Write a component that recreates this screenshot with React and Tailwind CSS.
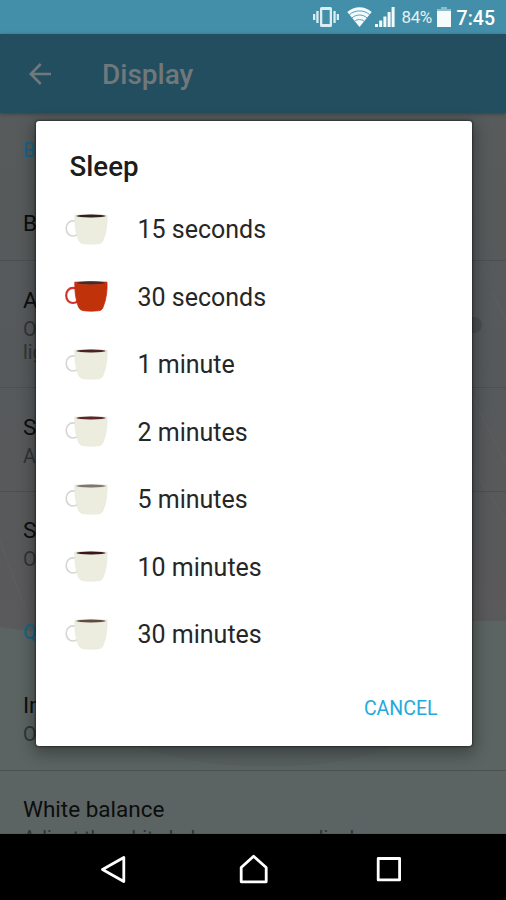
import React from "react";

const options = [
    { label: "15 seconds", coffee: "#30211d" },
    { label: "30 seconds", coffee: "#4a2a20", selected: true },
    { label: "1 minute", coffee: "#4b2220" },
    { label: "2 minutes", coffee: "#5a2428" },
    { label: "5 minutes", coffee: "#81766f" },
    { label: "10 minutes", coffee: "#3b1517" },
    { label: "30 minutes", coffee: "#624c3d" },
];

function Cup({ coffee, selected }) {
    const body = selected ? "#c0330a" : "#ecedde";
    const edge = selected ? "#cf2310" : "#e9eadc";
    const handle = selected ? "#d3332a" : "#d6d6d2";
    return (
        <svg width="44" height="32" viewBox="0 0 44 32" fill="none" className="shrink-0">
            <path d="M12 8.2C10.8 7.2 9.6 6.9 8 6.9C4.2 6.9 1.2 9.9 1.2 14.4C1.2 18.9 4.2 22 8 22C9.8 22 11.6 21.3 13 20" stroke={handle} strokeWidth={selected ? 2.2 : 1.7} />
            <path d="M9.8 1.1H42C42.4 9.5 41.4 18 38.2 25.9C37.2 28.5 36.2 29.5 33.4 29.7C28.4 30.3 24 30.3 18.8 29.7C16 29.4 14.6 28.3 13.4 25.7C10.4 18 9.6 9.5 9.8 1.1Z" fill={body} stroke={edge} strokeWidth="0.8" />
            <ellipse cx="26" cy="1.9" rx="16" ry="1.8" fill={selected ? "#c8412b" : "#dddcd3"} />
            <ellipse cx="26" cy="2" rx="14.4" ry="1.5" fill={coffee} />
        </svg>
    );
}

function StatusBar() {
    return (
        <div className="flex h-[34px] shrink-0 items-center justify-end bg-[#438fa9] pr-[11px] text-white">
            <svg width="26" height="20" viewBox="0 0 26 20" fill="#d9edf3">
                <path fillRule="evenodd" d="M8.5 0H17.5Q19 0 19 1.5V18.5Q19 20 17.5 20H8.5Q7 20 7 18.5V1.5Q7 0 8.5 0ZM9.3 3V17H16.7V3Z" />
                <path d="M3.3 4H5.6V16H3.3ZM0 7H2.3V13H0ZM20.4 4H22.7V16H20.4ZM23.7 7H26V13H23.7Z" />
            </svg>
            <svg width="25" height="20" viewBox="0 0 25 20" className="ml-[8px]">
                <path d="M0.3 5C7 -1.4 18 -1.4 24.7 5L12.5 20Z" fill="#f2fafc" />
                <path d="M2.2 7.8C8 2.6 17 2.6 22.8 7.8M4.8 11C9.2 7 15.8 7 20.2 11M7.6 14.3C10.4 12 14.6 12 17.4 14.3" stroke="#5a9fb6" strokeWidth="1" fill="none" />
            </svg>
            <svg width="20" height="20" viewBox="0 0 20 20" fill="#f2fafc" className="ml-[3px]">
                <path d="M0 17H3V20H0ZM4.2 13.5H7.2V20H4.2ZM8.4 9.5H11.4V20H8.4ZM12.6 5H15.6V20H12.6ZM16.6 0H19.6V20H16.6Z" />
            </svg>
            <span className="ml-[7px] w-[32px] whitespace-nowrap pt-[2px] text-[17px] tracking-[-0.5px] text-[#e3f0f4]">84%</span>
            <svg width="14" height="20" viewBox="0 0 14 20" className="ml-[3px]">
                <path d="M4 0H10V2H14V20H0V2H4Z" fill="#8dbccb" />
                <path d="M0 4H14V20H0Z" fill="#f6fbfc" />
            </svg>
            <span className="ml-[6px] pt-[3px] text-[19.5px] font-medium">7:45</span>
        </div>
    );
}

function Setting({ title, summary, className }) {
    return (
        <div className={`flex flex-col border-b border-[#4b5051] px-[23px] ${className}`}>
            <div className="text-[22.5px] leading-[28px] text-[#0c0d0d]">{title}</div>
            {summary && <div className="pt-[4px] text-[19.7px] leading-[23px] text-[#303435]">{summary}</div>}
        </div>
    );
}

function Wallpaper() {
    return (
        <svg width="506" height="720" viewBox="0 0 506 720" className="absolute inset-0">
            <defs>
                <linearGradient id="upper" x1="0" y1="0" x2="0" y2="1">
                    <stop offset="0" stopColor="#575b5b" />
                    <stop offset="0.5" stopColor="#56595b" />
                    <stop offset="1" stopColor="#5a595b" />
                </linearGradient>
            </defs>
            <rect width="506" height="515" fill="url(#upper)" />
            <path d="M0 514L36 519L470 508H506V720H0Z" fill="#5b6462" />
            <path d="M0 428L26 498M493 180L506 207M470 350L506 408M470 280L506 350" stroke="#606466" strokeWidth="1" opacity="0.5" />
            <path d="M130 630H400C350 656 220 666 130 630Z" fill="#555b5b" opacity="0.5" />
        </svg>
    );
}

function NavBar() {
    return (
        <div className="z-10 flex h-[66px] shrink-0 items-center bg-black pt-[11px]">
            <svg width="506" height="40" viewBox="0 0 506 40" fill="none" stroke="#fff" strokeWidth="2.8" strokeLinejoin="round">
                <path d="M102.5 16.5L123.8 4.5V28.5Z" />
                <path d="M241.2 28.8V14.5L253.6 3.2L266.2 14.5V28.8Z" />
                <rect x="378.2" y="5.5" width="21.4" height="21.4" />
            </svg>
        </div>
    );
}

function SleepDialog() {
    return (
        <div className="absolute left-[35.5px] top-[120.5px] z-20 flex h-[625.5px] w-[436px] flex-col rounded-[3px] bg-white shadow-[0_5px_16px_3px_rgba(0,0,0,0.32),0_0_2px_1px_rgba(0,0,0,0.4)]">
            <h2 className="pl-[34px] pt-[29px] text-[27.7px] font-medium leading-[34px] text-[#1c1c1c]">Sleep</h2>
            <ul className="mt-[12.5px]">
                {options.map((item) => (
                    <li key={item.label} className="flex h-[67.5px] items-center pl-[29.5px]">
                        <Cup coffee={item.coffee} selected={item.selected} />
                        <span className="ml-[28.5px] text-[25px] text-[#262626]">{item.label}</span>
                    </li>
                ))}
            </ul>
            <button className="ml-auto mr-[34px] mt-[26px] text-[19.5px] leading-[28px] text-[#23aadd]">CANCEL</button>
        </div>
    );
}

export default function App() {
    return (
        <div className="relative flex h-[900px] w-[506px] flex-col overflow-hidden bg-[#575b5b] font-[Roboto,sans-serif]">
            <StatusBar />
            <header className="z-10 flex h-[79px] shrink-0 items-center bg-[#234e5f] pl-[29px] shadow-[0_1px_4px_rgba(0,0,0,0.3)]">
                <svg width="23" height="22" viewBox="0 0 23 22" fill="none" stroke="#71797c" strokeWidth="2.6">
                    <path d="M22 11H2M11.7 1L1.8 11L11.7 21" />
                </svg>
                <h1 className="ml-[50px] pt-[3px] text-[28px] font-medium text-[#71787b]">Display</h1>
            </header>
            <main className="relative min-h-0 flex-1 overflow-hidden">
                <Wallpaper />
                <div className="relative">
                    <div className="h-[73px] px-[23px] pt-[27px] text-[19.5px] font-medium leading-[22px] text-[#1b6580]">Brightness</div>
                    <Setting title="Brightness level" className="h-[75px] pt-[23px]" />
                    <Setting title="Adaptive brightness" summary={<>Optimize brightness level for available<br />light</>} className="h-[127px] pt-[25px]" />
                    <Setting title="Sleep" summary="After 30 seconds of inactivity" className="h-[104px] pt-[25px]" />
                    <Setting title="Smart backlight control" summary="Off" className="h-[122px] border-b-0 pt-[24px]" />
                    <div className="h-[54px] px-[23px] pt-[8px] text-[19.5px] font-medium leading-[22px] text-[#1b6580]">Quality</div>
                    <Setting title="Image enhancement" summary="Off" className="h-[103px] pt-[23px]" />
                    <Setting title="White balance" summary="Adjust the white balance on your display" className="h-[110px] pt-[24px]" />
                </div>
                <div className="absolute left-[456px] top-[204px] h-[16px] w-[26px] rounded-full bg-[#4b4e4f]" />
            </main>
            <NavBar />
            <SleepDialog />
        </div>
    );
}
